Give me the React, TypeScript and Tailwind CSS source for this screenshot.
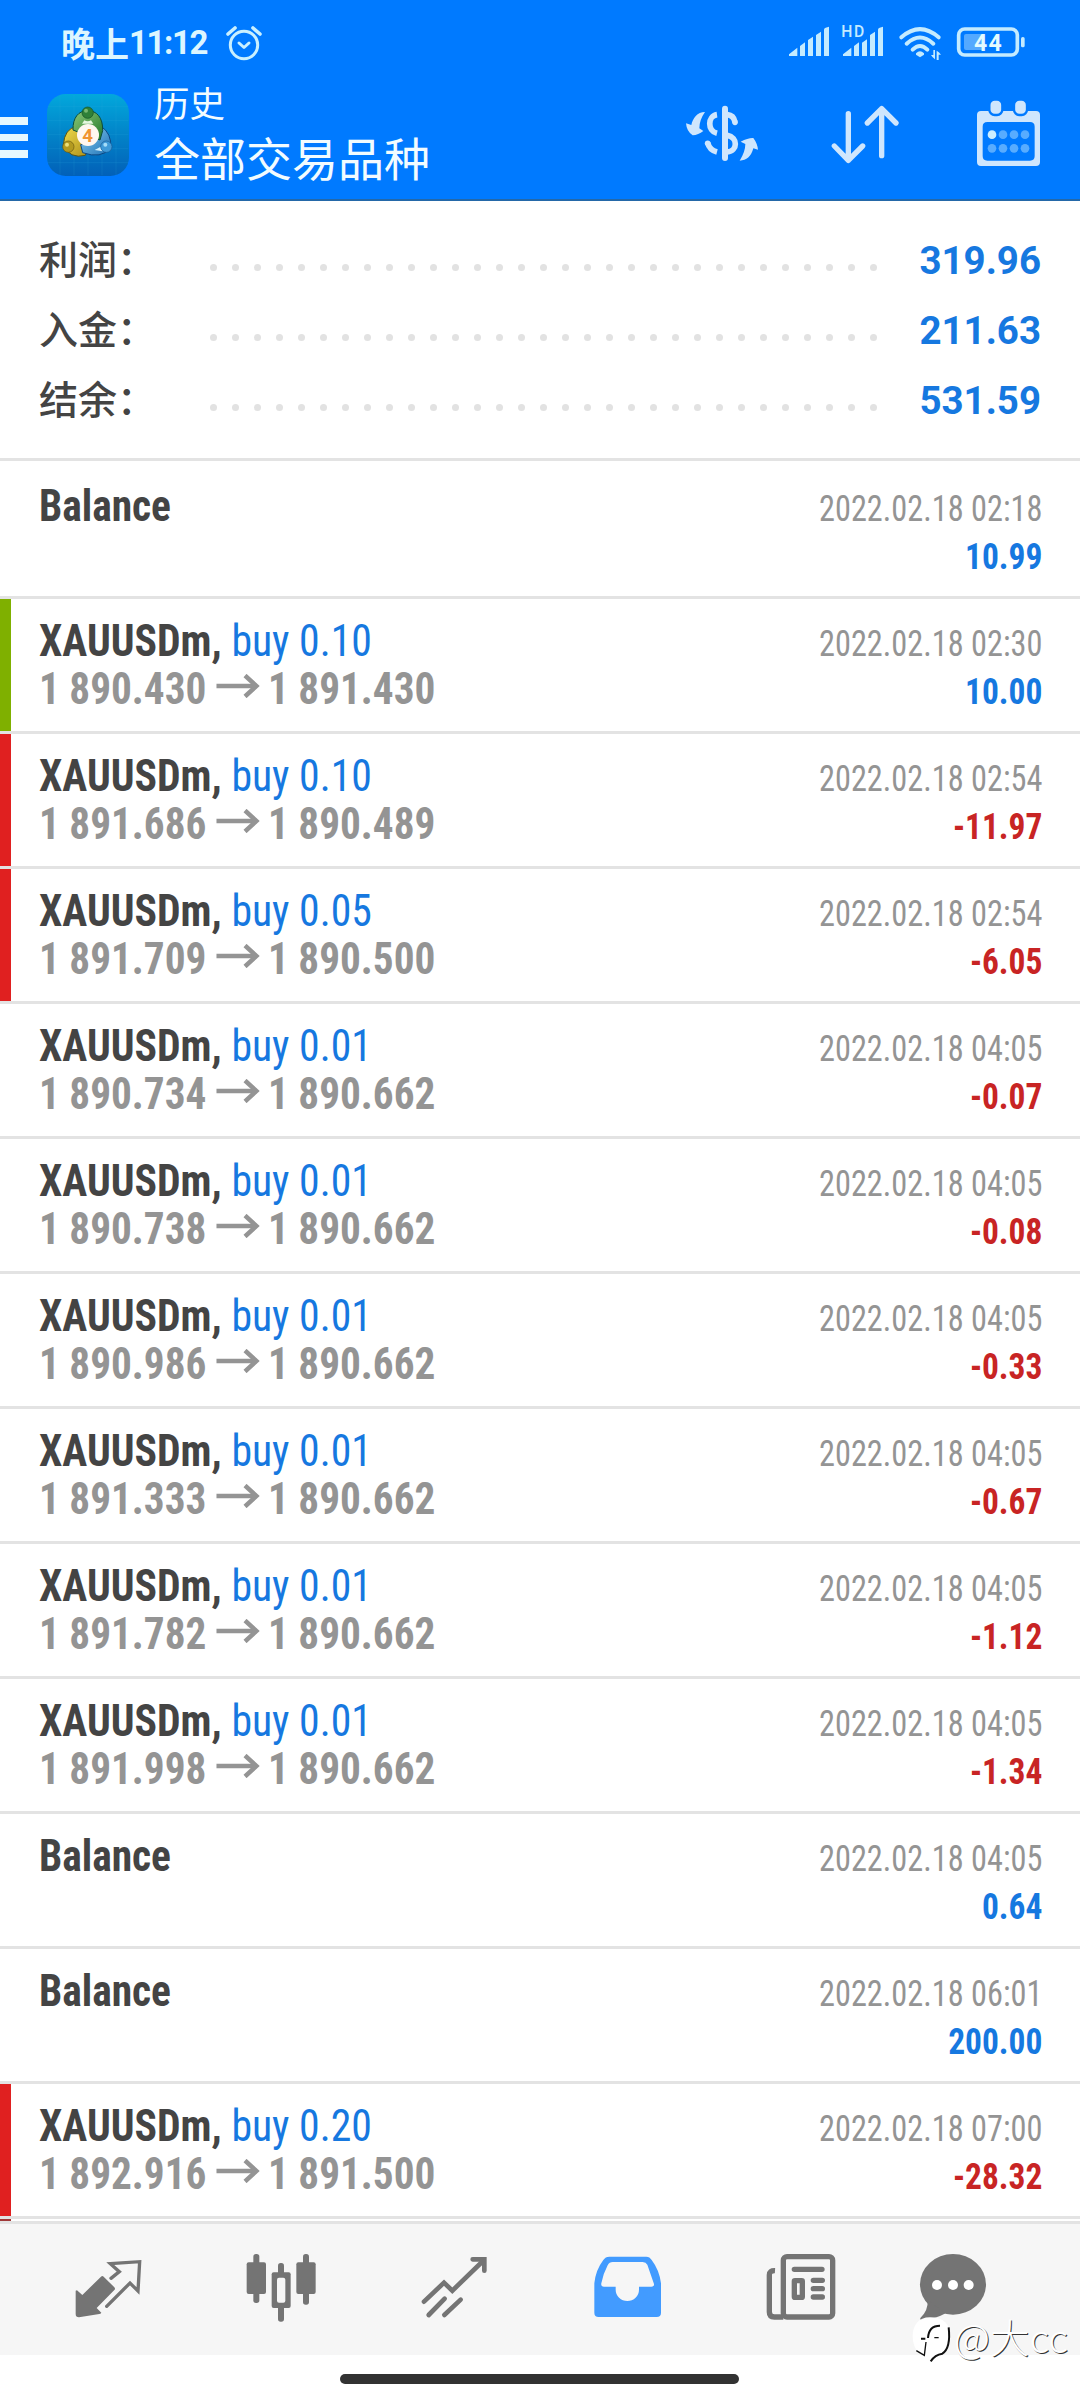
type Deal = {
  symbol?: string;
  action?: string;
  open?: string;
  close?: string;
  time: string;
  profit: string;
  mark?: "green" | "red";
};

const summary = [
  { label: "利润：", value: "319.96" },
  { label: "入金：", value: "211.63" },
  { label: "结余：", value: "531.59" },
];

const deals: Deal[] = [
  { time: "2022.02.18 02:18", profit: "10.99" },
  { symbol: "XAUUSDm", action: "buy 0.10", open: "1 890.430", close: "1 891.430", time: "2022.02.18 02:30", profit: "10.00", mark: "green" },
  { symbol: "XAUUSDm", action: "buy 0.10", open: "1 891.686", close: "1 890.489", time: "2022.02.18 02:54", profit: "-11.97", mark: "red" },
  { symbol: "XAUUSDm", action: "buy 0.05", open: "1 891.709", close: "1 890.500", time: "2022.02.18 02:54", profit: "-6.05", mark: "red" },
  { symbol: "XAUUSDm", action: "buy 0.01", open: "1 890.734", close: "1 890.662", time: "2022.02.18 04:05", profit: "-0.07" },
  { symbol: "XAUUSDm", action: "buy 0.01", open: "1 890.738", close: "1 890.662", time: "2022.02.18 04:05", profit: "-0.08" },
  { symbol: "XAUUSDm", action: "buy 0.01", open: "1 890.986", close: "1 890.662", time: "2022.02.18 04:05", profit: "-0.33" },
  { symbol: "XAUUSDm", action: "buy 0.01", open: "1 891.333", close: "1 890.662", time: "2022.02.18 04:05", profit: "-0.67" },
  { symbol: "XAUUSDm", action: "buy 0.01", open: "1 891.782", close: "1 890.662", time: "2022.02.18 04:05", profit: "-1.12" },
  { symbol: "XAUUSDm", action: "buy 0.01", open: "1 891.998", close: "1 890.662", time: "2022.02.18 04:05", profit: "-1.34" },
  { time: "2022.02.18 04:05", profit: "0.64" },
  { time: "2022.02.18 06:01", profit: "200.00" },
  { symbol: "XAUUSDm", action: "buy 0.20", open: "1 892.916", close: "1 891.500", time: "2022.02.18 07:00", profit: "-28.32", mark: "red" },
];

function StatusIcons() {
  return (
    <svg width="243" height="56" viewBox="315 0 729 168" fill="#c4ebff">
      <path d="M0 123v-5l25-20v25z M33 123v-30l15-11v41z M57 123v-48l15-10v58z M81 123v-63l15-10v73z M105 123v-79q0-5 5-6l10-3v88z" transform="translate(327 0)" />
      <path d="M0 123v-5l25-20v25z M33 123v-30l15-11v41z M57 123v-40l15-10v50z M81 123v-63l15-10v73z M105 123v-79q0-5 5-6l10-3v88z" transform="translate(489 0)" />
      <text x="484" y="66" fontFamily="Roboto" fontSize="47" fontWeight="500" textLength="69">HD</text>
      <g fill="none" stroke="#c4ebff" strokeWidth="12" strokeLinecap="round">
        <path d="M664 67Q720 18 776 67" />
        <path d="M680 86Q720 49 760 86" />
        <path d="M698 104Q720 82 742 104" />
      </g>
      <path d="M708 115q12-12 24 0v4l-12 8-12-8z" />
      <path d="M760 105h5v28q-8-6-12-13h7z M776 135h-6v-28q8 5 13 12h-7z" />
      <rect x="836" y="42" width="176" height="78" rx="18" fill="none" stroke="#c4ebff" strokeWidth="11" />
      <rect x="852" y="57" width="58" height="48" rx="6" fill="#54a9ff" />
      <rect x="1023" y="66" width="11" height="31" rx="5" />
      <text x="882" y="107" fontFamily="Roboto" fontSize="69" fontWeight="700" fill="#e4fbff" textLength="83">44</text>
    </svg>
  );
}

function AlarmIcon() {
  return (
    <svg width="36" height="36" viewBox="0 0 36 36" fill="none" stroke="#c9f0ff" strokeWidth="3" strokeLinecap="round" strokeLinejoin="round">
      <circle cx="18" cy="20" r="13.7" />
      <path d="M13 18l5 4.500 5-4.500" />
      <path d="M2 9l7-6M34 9l-7-6" strokeWidth="3.6" />
    </svg>
  );
}

function AppLogo() {
  return (
    <svg width="82" height="82" viewBox="53 42 246 246">
      <defs>
        <linearGradient id="tile" x1="0" y1="0" x2="0" y2="1">
          <stop offset="0" stopColor="#02a8dc" />
          <stop offset="0.5" stopColor="#0283c8" />
          <stop offset="1" stopColor="#0260b8" />
        </linearGradient>
        <linearGradient id="green" x1="0" y1="0" x2="1" y2="1">
          <stop offset="0" stopColor="#8cc878" />
          <stop offset="1" stopColor="#23782a" />
        </linearGradient>
        <linearGradient id="yellow" x1="0" y1="0" x2="1" y2="1">
          <stop offset="0" stopColor="#f2dc4c" />
          <stop offset="1" stopColor="#a88c18" />
        </linearGradient>
        <linearGradient id="blue" x1="0" y1="0" x2="1" y2="1">
          <stop offset="0" stopColor="#8ed2f4" />
          <stop offset="1" stopColor="#1b6fb4" />
        </linearGradient>
      </defs>
      <rect x="53" y="42" width="246" height="246" rx="56" fill="url(#tile)" />
      <path d="M92 44v242M134 44v242M176 44v242M218 44v242M260 44v242M55 80h242M55 122h242M55 164h242M55 206h242M55 248h242" stroke="#35b0e0" strokeOpacity="0.25" strokeWidth="2" />
      <path d="M142 140Q105 145 102 196q20 42 66 30l16-36z" fill="url(#yellow)" stroke="#5b5413" strokeWidth="3" />
      <path d="M214 138q34 22 30 66-28 34-84 14l-6-24 44-12z" fill="url(#blue)" stroke="#0c4680" strokeWidth="3" />
      <path d="M131 150C130 112 148 92 175 92s46 20 45 60l-8 28-66-24z" fill="url(#green)" stroke="#0c4d3c" strokeWidth="3" />
      <path d="M165 121q10 6 20 0l7 10h-34z" fill="#e6f7e0" />
      <path d="M196 210l18-10 6 14z" fill="#d5f0fb" />
      <circle cx="175" cy="98" r="17" fill="#2f8038" stroke="#125022" strokeWidth="2" />
      <circle cx="170" cy="92" r="6" fill="#79b870" />
      <circle cx="117" cy="200" r="17" fill="#b39a20" stroke="#665810" strokeWidth="2" />
      <circle cx="113" cy="194" r="6" fill="#ece07a" />
      <circle cx="231" cy="200" r="17" fill="#3f9ad8" stroke="#165a96" strokeWidth="2" />
      <circle cx="228" cy="194" r="6" fill="#a5dcf8" />
      <circle cx="176" cy="165" r="33" fill="#fff7f0" />
      <text x="175" y="185" textAnchor="middle" fontFamily="Roboto" fontSize="56" fontWeight="700" fill="#f09430">4</text>
    </svg>
  );
}

function DollarIcon() {
  return (
    <svg width="80" height="67" viewBox="0 255 240 201" fill="#cfe6fd">
      <path d="M135 281v148" stroke="#cfe6fd" strokeWidth="18" strokeLinecap="round" />
      <g fill="none" stroke="#cfe6fd" strokeWidth="17">
        <path d="M111 299C82 303 82 348 111 355" />
        <path d="M142 299Q161 301 165 321" />
        <path d="M142 361C174 366 174 408 142 411" />
        <path d="M83 383Q88 405 111 411" />
      </g>
      <circle cx="165" cy="322" r="8.5" />
      <circle cx="83" cy="385" r="8.5" />
      <path d="M75 291C52 291 38 310 34 330L18 325Q20 350 38 361Q55 360 70 348L58 340Q58 315 75 291Z" />
      <path d="M179 437C200 436 213 425 220 400L234 404Q232 385 220 369Q205 368 182 380L196 387Q196 410 179 437Z" />
    </svg>
  );
}

function SortIcon() {
  return (
    <svg width="70" height="67" viewBox="450 255 210 201" fill="none" stroke="#cfe6fd" strokeWidth="16" strokeLinecap="round" strokeLinejoin="round">
      <path d="M505 296v140M463 393l42 43 43-43" />
      <path d="M605 422V281M562 324l43-43 43 43" />
    </svg>
  );
}

function CalendarIcon() {
  return (
    <svg width="67" height="67" viewBox="885 255 201 201">
      <path fillRule="evenodd" fill="#cfe6fd" d="M903 288h165q12 0 12 12v141q0 12-12 12H903q-12 0-12-12V300q0-12 12-12zM922 321q-14 0-14 14v88q0 14 14 14h128q14 0 14-14v-88q0-14-14-14z" />
      <g fill="#cfe6fd" stroke="#007aff" strokeWidth="7">
        <rect x="928" y="254" width="39" height="46" rx="16" />
        <rect x="1002" y="254" width="39" height="46" rx="16" />
      </g>
      <circle cx="936" cy="359" r="13" fill="#cdeeff" />
      {[969, 1002, 1035].map((x) => (
        <circle key={x} cx={x} cy="359" r="13" fill="#58acff" />
      ))}
      {[936, 969, 1002, 1035].map((x) => (
        <circle key={x} cx={x} cy="400" r="13" fill="#58acff" />
      ))}
    </svg>
  );
}

function Header() {
  return (
    <header className="h-[201px] bg-[#007aff] border-b-2 border-[#2468a8]">
      <div className="flex h-[86px] items-center pl-[61px] pr-[52px]">
        <p className="flex w-[149px] items-center text-[#dcf6ff] text-[33px] font-bold leading-[36px]">
          <span className="font-['Noto_Sans_CJK_SC',sans-serif] text-[34px]">晚上</span>
          <span className="tracking-[-1.4px]">11:12</span>
        </p>
        <div className="ml-4 mr-auto">
          <AlarmIcon />
        </div>
        <StatusIcons />
      </div>

      <div className="flex items-start pr-[38px]">
        <div className="mt-[31px] flex w-[28px] flex-col gap-[9px]">
          <span className="h-[7.5px] bg-[#e6f8ff]" />
          <span className="h-[7.5px] bg-[#e6f8ff]" />
          <span className="h-[7.5px] bg-[#e6f8ff]" />
        </div>
        <div className="ml-[19px] mt-2">
          <AppLogo />
        </div>
        <div className="-mt-[2px] ml-[25px] mr-auto font-['Noto_Sans_CJK_SC',sans-serif] text-[#f2fcff]">
          <h2 className="text-[35.5px] leading-[36px]">历史</h2>
          <h1 className="mt-2 text-[46px] leading-[56px]">全部交易品种</h1>
        </div>
        <div className="mt-[14px] flex">
          <DollarIcon />
          <div className="ml-[70px] mr-[75px]">
            <SortIcon />
          </div>
          <CalendarIcon />
        </div>
      </div>
    </header>
  );
}

function Summary() {
  return (
    <section className="h-[260px] border-b-[3px] border-[#e3e3e3] pt-[22px]">
      {summary.map((item) => (
        <div key={item.label} className="flex h-[70px] items-center pl-[39px] pr-[39px]">
          <span className="mb-[3px] w-[171px] font-['Noto_Sans_CJK_SC',sans-serif] text-[39px] font-medium leading-[66px] text-[#444]">{item.label}</span>
          <div className="mt-[19px] flex gap-[15px]">
            {Array.from({ length: 31 }, (_, i) => (
              <span key={i} className="size-[7px] rounded-full bg-[#e2e2e2]" />
            ))}
          </div>
          <span className="ml-auto mt-[5px] text-[38.5px] font-bold leading-[60px] text-[#1678e0]">{item.value}</span>
        </div>
      ))}
    </section>
  );
}

function PriceArrow() {
  return (
    <svg className="ml-[10px] mr-[9px] mb-[8px]" width="46" height="24" viewBox="0 0 44 24" preserveAspectRatio="none" fill="none" stroke="#949494" strokeWidth="4.5">
      <path d="M0 12h41" />
      <path d="M29 1.500l11.500 10.500L29 22.500" />
    </svg>
  );
}

function DealRow({ deal }: { deal: Deal }) {
  return (
    <li className="flex h-[135px] border-b-[3px] border-[#e3e3e3] font-['Roboto_Condensed','Roboto',sans-serif] [font-stretch:75%] first:h-[138px] first:pt-[3px]">
      <div className="w-[11px] shrink-0">
        {deal.mark === "green" && <div className="h-full bg-[#7fb000]" />}
        {deal.mark === "red" && <div className="h-full bg-[#e02020]" />}
      </div>
      <div className="flex-1 pl-[28px] pt-[19px] text-[43.5px] leading-[48px]">
        {deal.symbol ? (
          <>
            <p className="origin-left scale-x-[0.959] whitespace-pre">
              <span className="font-bold text-[#444]">{deal.symbol}, </span>
              <span className="text-[#1678e0]">{deal.action}</span>
            </p>
            <p className="flex origin-left scale-x-[0.948] items-center font-bold text-[#949494]">
              {deal.open}
              <PriceArrow />
              {deal.close}
            </p>
          </>
        ) : (
          <p className="origin-left scale-x-[0.952] font-bold text-[#444]">Balance</p>
        )}
      </div>
      <div className="pr-[38px] pt-[21px] text-right text-[36.5px] leading-[48px]">
        <p className="origin-right scale-x-[0.885] text-[#949494]">{deal.time}</p>
        <p className={deal.profit.startsWith("-") ? "origin-right scale-x-[0.916] font-bold text-[#c82424]" : "origin-right scale-x-[0.916] font-bold text-[#1678e0]"}>{deal.profit}</p>
      </div>
    </li>
  );
}

function TabBar() {
  return (
    <nav className="flex h-[134px] border-t-[3px] border-[#e3e3e3] bg-[#f6f6f6] pl-[22px]">
      {/* quotes */}
      <svg width="173" height="131" viewBox="-114 -48 519 393">
        <path fill="#747474" d="M47 152l4-1 16 14 56-55q4-4 8 0l32 32q4 4 0 8l-53 54 14 14q0 3-6 4l-61 10q-10 0-10-10z" />
        <path fill="none" stroke="#747474" strokeWidth="10" d="M153 115l25-20-27-24 88-6-5 88-24-24-70 70" strokeLinecap="round" />
      </svg>
      {/* chart */}
      <svg width="173" height="131" viewBox="405 -48 519 393" fill="#747474">
        <rect x="580" y="42" width="18" height="147" rx="8" />
        <rect x="560" y="67" width="58" height="95" rx="6" />
        <rect x="729" y="42" width="18" height="152" rx="8" />
        <rect x="709" y="67" width="58" height="95" rx="6" />
        <rect x="654" y="69" width="18" height="176" rx="8" />
        <rect x="635" y="97" width="57" height="107" rx="6" />
        <rect x="651" y="113" width="25" height="75" rx="6" fill="#f6f6f6" />
      </svg>
      {/* trade */}
      <svg width="173" height="131" viewBox="924 -48 519 393" fill="none" stroke="#747474" strokeWidth="14" strokeLinecap="round">
        <path d="M1092 185l60-57 25 24 92-89" strokeLinejoin="miter" />
        <path d="M1238 58h35v34" />
        <path d="M1106 225l48-49M1153 225l49-46" />
      </svg>
      {/* history, the open tab */}
      <svg width="173" height="131" viewBox="-117 -48 519 393">
        <path fillRule="evenodd" fill="#429bff" d="M43 130Q47 90 70 60Q76 50 88 50H199Q209 50 215 60Q238 90 243 130V218Q243 231 230 231H56Q43 231 43 218ZM64 130Q70 100 83 76Q88 66 98 66H188Q198 66 202 74L222 132Q223 140 214 140H177V149A35 34 0 0 1 107 149V140H72Q62 140 64 130Z" />
      </svg>
      {/* news */}
      <svg width="173" height="131" viewBox="402 -48 519 393" fill="none" stroke="#747474" strokeWidth="16" strokeLinecap="round">
        <rect x="610" y="50" width="148" height="181" rx="11" />
        <path d="M585 92Q568 91 568 105V216Q568 231 583 231H610" strokeLinecap="butt" />
        <path d="M643 88h83M700 121h27M700 146h27M700 171h27" />
        <rect x="643" y="122" width="24" height="50" rx="2" />
      </svg>
      {/* messages */}
      <svg width="173" height="131" viewBox="921 -48 519 393" fill="#747474">
        <ellipse cx="1119" cy="133" rx="99" ry="91" />
        <path d="M1043 180Q1045 212 1021 234Q1019 240 1026 240Q1065 238 1097 220Z" />
        <g fill="#fff">
          <circle cx="1071" cy="135" r="15" />
          <circle cx="1119" cy="135" r="15" />
          <circle cx="1166" cy="135" r="15" />
        </g>
      </svg>
    </nav>
  );
}

function Watermark() {
  return (
    <div className="absolute left-[911px] top-[2316px] flex items-start">
      <svg width="42" height="48" viewBox="993 234 126 144" fill="none" stroke="#111" strokeWidth="6">
        <path d="M1050 238C1015 238 998 262 998 295S1015 355 1050 355l-2 18q15-18 35-22c20-4 28-30 28-56 0-36-20-57-61-57z" fill="#fff" stroke="none" />
        <path d="M1023 302h13M1044 300Q1046 263 1080 263" />
        <path d="M1106 268Q1113 330 1087 347Q1065 350 1052 370" />
        <path d="M1038 312l-5 40-24-14M1063 299h13" strokeWidth="4" />
      </svg>
      <span className="ml-px -mt-[3px] font-['Noto_Sans_CJK_SC',sans-serif] text-[39.5px] font-light leading-[46px] text-white [text-shadow:1px_1px_0_#333]">@大cc</span>
    </div>
  );
}

export default function App() {
  return (
    <main className="relative flex h-[2400px] w-[1080px] flex-col overflow-hidden bg-white font-['Roboto','Noto_Sans_CJK_SC',sans-serif]">
      <Header />
      <Summary />
      <ul>
        {deals.map((deal, i) => (
          <DealRow key={i} deal={deal} />
        ))}
      </ul>
      {/* top edge of the next deal, cut off by the tab bar */}
      <div className="h-[2px] w-[11px] shrink-0 bg-[#a03838]" />
      <TabBar />
      <div className="flex flex-1 justify-center pr-[2px] pt-[19px]">
        <div className="h-[10px] w-[399px] rounded-full bg-[#323232]" />
      </div>
      <Watermark />
    </main>
  );
}
